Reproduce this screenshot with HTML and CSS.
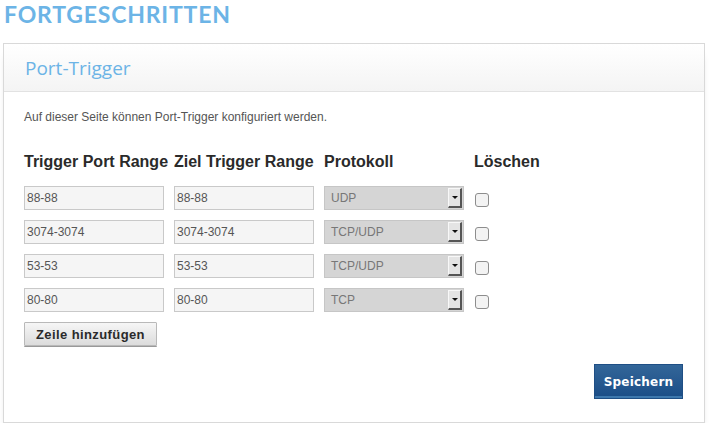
FILE: index.html
```html
<!DOCTYPE html>
<html lang="de">
<head>
<meta charset="utf-8">
<title>Port-Trigger</title>
<link rel="stylesheet" href="styles.css">
</head>
<body>
<h1 class="page-title">FORTGESCHRITTEN</h1>
<section class="card">
  <header class="card-head"><h2 class="card-title">Port-Trigger</h2></header>
  <div class="card-body">
    <p class="intro">Auf dieser Seite können Port-Trigger konfiguriert werden.</p>
    <div class="grid">
      <div class="th">Trigger Port Range</div>
      <div class="th">Ziel Trigger Range</div>
      <div class="th">Protokoll</div>
      <div class="th">Löschen</div>

      <div class="cell"><input class="field" type="text" value="88-88"></div>
      <div class="cell"><input class="field" type="text" value="88-88"></div>
      <div class="cell"><div class="select"><span class="sel-text">UDP</span><span class="sel-btn"><i class="tri"></i></span></div></div>
      <div class="cell"><span class="check"></span></div>

      <div class="cell"><input class="field" type="text" value="3074-3074"></div>
      <div class="cell"><input class="field" type="text" value="3074-3074"></div>
      <div class="cell"><div class="select"><span class="sel-text">TCP/UDP</span><span class="sel-btn"><i class="tri"></i></span></div></div>
      <div class="cell"><span class="check"></span></div>

      <div class="cell"><input class="field" type="text" value="53-53"></div>
      <div class="cell"><input class="field" type="text" value="53-53"></div>
      <div class="cell"><div class="select"><span class="sel-text">TCP/UDP</span><span class="sel-btn"><i class="tri"></i></span></div></div>
      <div class="cell"><span class="check"></span></div>

      <div class="cell"><input class="field" type="text" value="80-80"></div>
      <div class="cell"><input class="field" type="text" value="80-80"></div>
      <div class="cell"><div class="select"><span class="sel-text">TCP</span><span class="sel-btn"><i class="tri"></i></span></div></div>
      <div class="cell"><span class="check"></span></div>
    </div>
    <button class="btn-add" type="button">Zeile hinzufügen</button>
    <div class="actions"><button class="btn-save" type="button">Speichern</button></div>
  </div>
</section>
</body>
</html>
```
FILE: styles.css
```css
html, body { margin: 0; padding: 0; background: #fff; }
body { font-family: "Liberation Sans", Arial, sans-serif; color: #333; }

.page-title {
  margin: 0;
  padding: 0 0 0 4px;
  font-family: Lato, "Open Sans", sans-serif;
  font-weight: 700;
  font-size: 23px;
  line-height: 28px;
  letter-spacing: 0.8px;
  color: #6cb4e6;
}

.card {
  margin: 15px 0 0 3px;
  width: 700px;
  border: 1px solid #d9d9d9;
  background: #fff;
  box-shadow: 0 9px 8px -5px rgba(0,0,0,0.3);
}

.card-head {
  height: 47px;
  border-bottom: 1px solid #e2e2e2;
  background: linear-gradient(#ffffff, #f4f4f4);
  display: flex;
  align-items: center;
  padding-left: 21px;
}
.card-title {
  margin: 0;
  font-family: "Open Sans", "DejaVu Sans", sans-serif;
  font-weight: 500;
  font-size: 19px;
  color: #6cb4e6;
}

.card-body { padding: 18px 21px 23px 20px; }

.intro {
  margin: 0;
  font-size: 12px;
  line-height: 14px;
  color: #555;
}

.grid {
  margin-top: 29px;
  display: grid;
  grid-template-columns: 150px 150px 150px auto;
  row-gap: 10px;
}
.th {
  font-weight: bold;
  font-size: 16px;
  line-height: 18px;
  color: #2a2a2a;
  white-space: nowrap;
  margin-bottom: 5px;
}
.cell { display: flex; align-items: center; height: 24px; }

.field {
  box-sizing: border-box;
  width: 140px;
  height: 24px;
  margin: 0;
  padding: 0 2px;
  border: 1px solid #c9c9c9;
  background: #f5f5f5;
  font-family: "Liberation Sans", Arial, sans-serif;
  font-size: 12px;
  color: #555;
  outline: none;
}

.select {
  box-sizing: border-box;
  width: 140px;
  height: 24px;
  border: 1px solid #c6c6c6;
  background: #d5d5d5;
  display: flex;
  align-items: center;
  justify-content: space-between;
}
.sel-text { font-size: 12px; color: #777; padding-left: 6px; }
.sel-btn {
  box-sizing: border-box;
  width: 14px;
  height: 20px;
  margin-right: 1px;
  background: #e4e4e4;
  border-top: 1px solid #f8f8f8;
  border-left: 1px solid #f8f8f8;
  border-right: 2px solid #555;
  border-bottom: 2px solid #555;
  display: flex;
  align-items: center;
  justify-content: center;
}
.tri {
  width: 0; height: 0;
  border-left: 3px solid transparent;
  border-right: 3px solid transparent;
  border-top: 3px solid #111;
}

.check {
  box-sizing: border-box;
  width: 14px;
  height: 14px;
  margin: 3px 0 0 1px;
  border: 1px solid #8d8d8d;
  border-radius: 3px;
  background: #f3f3f3;
}

.btn-add {
  margin-top: 10px;
  height: 24px;
  padding: 0 11px;
  border: 1px solid #b9b9b9;
  border-radius: 1px;
  background: linear-gradient(#f6f6f6, #dcdcdc);
  box-shadow: 0 1px 0 #999;
  font-family: "Liberation Sans", Arial, sans-serif;
  font-weight: bold;
  font-size: 13px;
  letter-spacing: 0.4px;
  color: #2a2a2a;
}

.actions { display: flex; justify-content: flex-end; margin-top: 18px; }
.btn-save {
  width: 89px;
  height: 35px;
  border: 1px solid #1f4f85;
  background: linear-gradient(#336699, #1b4d86);
  box-shadow: inset 0 -2px 0 #3e78ad;
  color: #fff;
  font-family: "DejaVu Sans", "Open Sans", sans-serif;
  font-weight: bold;
  font-size: 12px;
  letter-spacing: 0.2px;
}
```
